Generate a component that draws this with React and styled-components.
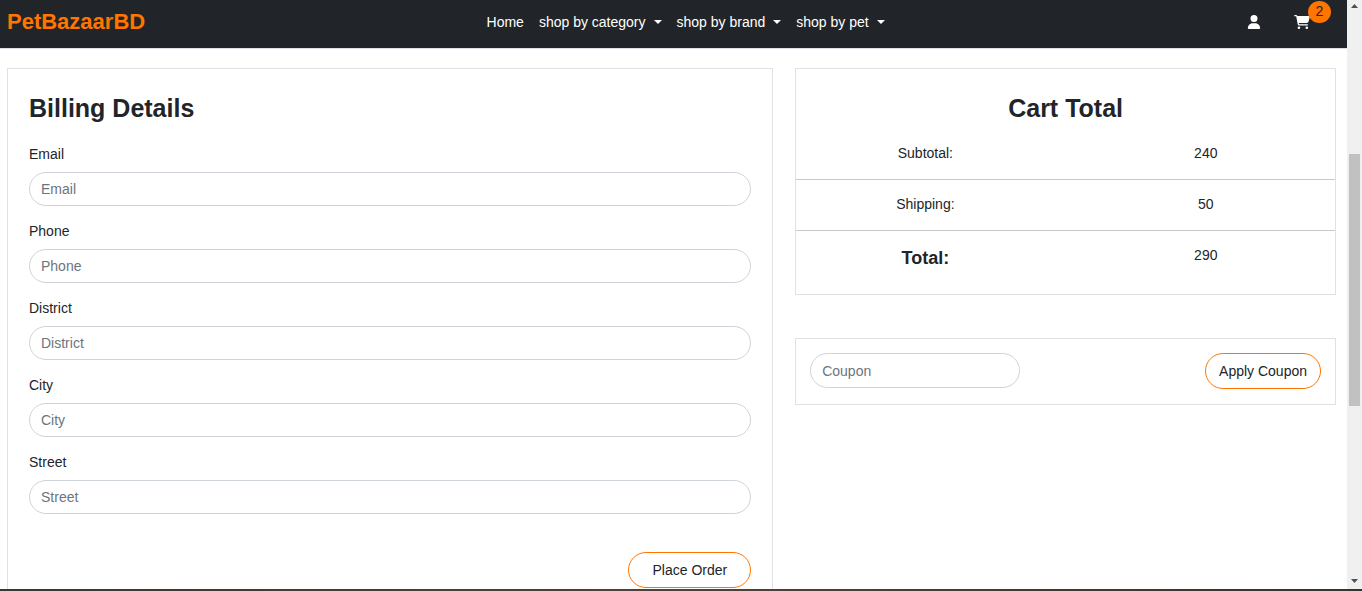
import React from "react";
import styled, { createGlobalStyle } from "styled-components";
import { FaUser, FaCartShopping } from "react-icons/fa6";

const GlobalStyle = createGlobalStyle`
  *, *::before, *::after { box-sizing: border-box; }
  body {
    margin: 0;
    background: #fff;
    color: #212529;
    font-family: "Liberation Sans", Arial, sans-serif;
    font-size: 14px;
    line-height: 22px;
  }
  button, input { font: inherit; color: inherit; }
`;

const Screen = styled.div`
  display: flex;
  flex-direction: column;
  height: 100vh;
  overflow: hidden;
`;

const Viewport = styled.div`
  display: flex;
  flex: 1;
  min-height: 0;
`;

const Page = styled.div`
  flex: 1;
  min-width: 0;
  overflow: hidden;
`;

const Desktop = styled.div`
  flex: none;
  height: 2px;
  background: linear-gradient(90deg, #3b3733, #54403a 50%, #38322f);
`;

const Navbar = styled.header`
  display: flex;
  align-items: center;
  height: 49px;
  padding: 0 37px 4px 7px;
  background: #212529;
  border-bottom: 1px solid #dee2e6;
`;

const Brand = styled.a`
  color: #ff7500;
  font-size: 22px;
  font-weight: 700;
  line-height: 32px;
  text-decoration: none;
`;

const Menu = styled.nav`
  display: flex;
  flex: 1;
  justify-content: center;
  gap: 15px;
`;

const MenuLink = styled.a`
  color: #fff;
  text-decoration: none;
`;

const MenuButton = styled.button`
  display: flex;
  align-items: center;
  gap: 8px;
  padding: 0;
  border: 0;
  background: none;
  color: #fff;

  &::after {
    content: "";
    border: 4px solid transparent;
    border-top-color: currentColor;
    border-bottom: 0;
  }
`;

const Actions = styled.div`
  display: flex;
  align-items: center;
  gap: 33px;
  padding-left: 21px;
`;

const IconLink = styled.a`
  position: relative;
  display: flex;
  color: #fff;

  svg {
    width: ${(p) => p.$width}px;
    height: 14px;
  }
`;

const Badge = styled.span`
  position: absolute;
  top: -14px;
  left: 14px;
  width: 23px;
  height: 22px;
  border-radius: 50%;
  background: #ff7500;
  color: #212529;
  line-height: 20px;
  text-align: center;
`;

const Content = styled.main`
  display: grid;
  grid-template-columns: 17fr 12fr;
  align-items: start;
  gap: 22px;
  padding: 19px 11px 19px 7px;
`;

const Side = styled.div`
  display: grid;
  gap: 43px;
`;

const Card = styled.section`
  border: 1px solid #dee2e6;
  background: #fff;
`;

const Title = styled.h2`
  margin: 0;
  font-size: 25px;
  font-weight: 700;
  line-height: 32px;
  text-align: ${(p) => (p.$center ? "center" : "left")};
`;

const BillingForm = styled.form`
  display: flex;
  flex-direction: column;
  gap: 14px;
  padding: 23px 21px 43px;
`;

const Fields = styled.div`
  display: grid;
  gap: 14px;
  padding-top: 5px;
`;

const Field = styled.div`
  display: grid;
  gap: 7px;
`;

const Input = styled.input`
  width: ${(p) => (p.$narrow ? "210px" : "100%")};
  min-width: 0;
  height: ${(p) => (p.$narrow ? "35px" : "34px")};
  padding: 0 11px;
  border: 1px solid #ced4da;
  border-radius: 18px;
  background: #fff;
  outline: 0;

  &::placeholder { color: #6c757d; opacity: 1; }
`;

const PillButton = styled.button`
  height: 36px;
  padding: 0 ${(p) => (p.$wide ? "23px" : "13px")};
  border: 1px solid #ff7500;
  border-radius: 18px;
  background: #fff;
`;

const FormActions = styled.div`
  display: flex;
  justify-content: flex-end;
  padding-top: 24px;
`;

const Summary = styled.div`
  padding: 23px 0 7px;
`;

const Totals = styled.table`
  width: 100%;
  margin-top: 5px;
  border-spacing: 0;
  table-layout: fixed;
`;

const TotalsRow = styled.tr`
  th, td {
    padding: 13px 0 15px;
    border-bottom: ${(p) => (p.$last ? "0" : "1px solid #c8c9ca")};
    text-align: center;
    vertical-align: top;
  }
  th {
    padding-right: 11px;
    font-size: ${(p) => (p.$last ? "18px" : "14px")};
    font-weight: ${(p) => (p.$last ? 700 : 400)};
    line-height: ${(p) => (p.$last ? "28px" : "22px")};
  }
  td { padding-left: 11px; }
`;

const CouponForm = styled.form`
  display: flex;
  justify-content: space-between;
  gap: 14px;
  padding: 14px 14px 15px;
`;

const Scrollbar = styled.div`
  display: flex;
  flex: none;
  flex-direction: column;
  width: 15px;
  background: #f0f0f0;
`;

const Arrow = styled.svg`
  flex: none;
  width: 15px;
  height: 15px;
  fill: #505050;
`;

const Track = styled.div`
  flex: ${(p) => p.$share} 0 0;
`;

const Thumb = styled(Track)`
  width: 11px;
  margin-left: 2px;
  background: #c1c1c1;
`;

const fields = [
  { id: "email", label: "Email", type: "email" },
  { id: "phone", label: "Phone", type: "tel" },
  { id: "district", label: "District", type: "text" },
  { id: "city", label: "City", type: "text" },
  { id: "street", label: "Street", type: "text" },
];

const totals = [
  { label: "Subtotal:", value: 240 },
  { label: "Shipping:", value: 50 },
  { label: "Total:", value: 290 },
];

const hold = (event) => event.preventDefault();

export default function App() {
  return (
    <Screen>
      <GlobalStyle />
      <Viewport>
        <Page>
          <Navbar>
            <Brand href="#">PetBazaarBD</Brand>
            <Menu>
              <MenuLink href="#">Home</MenuLink>
              <MenuButton type="button">shop by category</MenuButton>
              <MenuButton type="button">shop by brand</MenuButton>
              <MenuButton type="button">shop by pet</MenuButton>
            </Menu>
            <Actions>
              <IconLink href="#" aria-label="Account" $width={14}>
                <FaUser />
              </IconLink>
              <IconLink href="#" aria-label="Cart" $width={16}>
                <FaCartShopping />
                <Badge>2</Badge>
              </IconLink>
            </Actions>
          </Navbar>

          <Content>
            <Card>
              <BillingForm onSubmit={hold}>
                <Title>Billing Details</Title>
                <Fields>
                  {fields.map((field) => (
                    <Field key={field.id}>
                      <label htmlFor={field.id}>{field.label}</label>
                      <Input id={field.id} type={field.type} placeholder={field.label} />
                    </Field>
                  ))}
                </Fields>
                <FormActions>
                  <PillButton type="submit" $wide>Place Order</PillButton>
                </FormActions>
              </BillingForm>
            </Card>

            <Side>
              <Card>
                <Summary>
                  <Title $center>Cart Total</Title>
                  <Totals>
                    <tbody>
                      {totals.map((row, index) => (
                        <TotalsRow key={row.label} $last={index === totals.length - 1}>
                          <th scope="row">{row.label}</th>
                          <td>{row.value}</td>
                        </TotalsRow>
                      ))}
                    </tbody>
                  </Totals>
                </Summary>
              </Card>
              <Card>
                <CouponForm onSubmit={hold}>
                  <Input type="text" placeholder="Coupon" aria-label="Coupon" $narrow />
                  <PillButton type="submit">Apply Coupon</PillButton>
                </CouponForm>
              </Card>
            </Side>
          </Content>
        </Page>

        <Scrollbar aria-hidden="true">
          <Arrow viewBox="0 0 15 15"><path d="M4 8 7.500 4 11 8z" /></Arrow>
          <Track $share={139} />
          <Thumb $share={252} />
          <Track $share={168} />
          <Arrow viewBox="0 0 15 15"><path d="M4 5h7L7.500 9z" /></Arrow>
        </Scrollbar>
      </Viewport>
      <Desktop />
    </Screen>
  );
}
